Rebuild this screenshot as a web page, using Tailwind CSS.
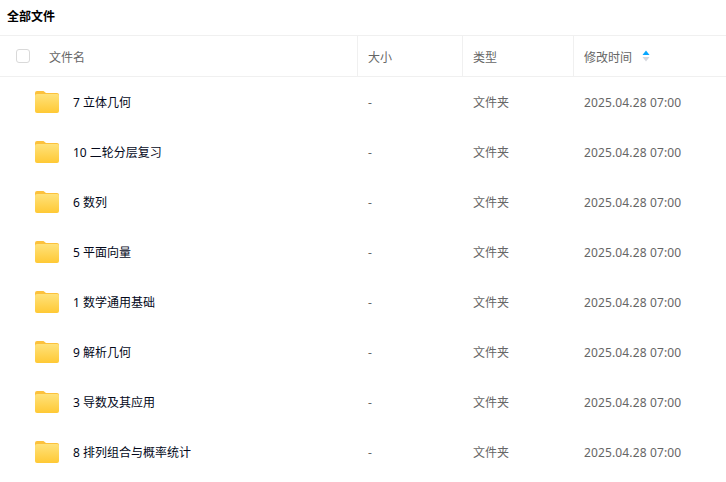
<!DOCTYPE html>
<html lang="zh-CN">
<head>
    <meta charset="UTF-8">
    <meta name="viewport" content="width=device-width, initial-scale=1.0">
    <title>全部文件</title>
    <script src="https://cdn.jsdelivr.net/npm/@tailwindcss/browser@4"></script>
</head>
<body class="bg-white overflow-hidden font-['Noto_Sans','Noto_Sans_CJK_SC',sans-serif]">
<!-- 文件夹图标 -->
<svg width="0" height="0" class="absolute">
    <defs>
        <linearGradient id="folderFill" x1="0" y1="0" x2="0" y2="1">
            <stop offset="0" stop-color="#ffe27a"/>
            <stop offset="1" stop-color="#ffc935"/>
        </linearGradient>
    </defs>
    <symbol id="folder" viewBox="0 0 24 22">
        <path d="M2 0h6.5l2.5 2h11a2 2 0 0 1 2 2v3H0V2a2 2 0 0 1 2-2z" fill="#fcc13c"/>
        <rect y="3" width="24" height="19" rx="2" fill="url(#folderFill)"/>
    </symbol>
</svg>
<div class="w-[726px] h-[482px] overflow-hidden">
    <!-- 标题 -->
    <div class="h-[35px] pl-[7px] pb-[2px] flex items-center text-xs font-bold text-black">全部文件</div>

    <!-- 表头 -->
    <div class="h-[42px] grid grid-cols-[358px_105px_111px_1fr] border-y border-[#f0f0f0] text-xs text-[#666]">
        <div class="flex items-center border-r border-[#f0f0f0]">
            <span class="ml-4 w-[14px] h-[14px] rounded-[3px] border border-[#d9d9d9]"></span>
            <span class="ml-[19px] pt-[3px]">文件名</span>
        </div>
        <div class="flex items-center border-r border-[#f0f0f0] pl-[10px] pt-[3px]">大小</div>
        <div class="flex items-center border-r border-[#f0f0f0] pl-[10px] pt-[3px]">类型</div>
        <div class="flex items-center pl-[10px]">
            <span class="pt-[3px]">修改时间</span>
            <svg class="ml-[10px]" width="8" height="12" viewBox="0 0 8 12">
                <path d="M4 0.5 L7.5 5 L0.5 5 Z" fill="#06a7ff"/>
                <path d="M4 11.5 L7.5 7 L0.5 7 Z" fill="#d4d7de"/>
            </svg>
        </div>
    </div>

    <!-- 文件列表 -->
    <div class="text-xs text-[#666]">
        <div class="h-[50px] grid grid-cols-[358px_105px_111px_1fr] items-center">
            <div class="flex items-center pl-[35px] text-[#03081a]">
                <svg width="24" height="22"><use href="#folder"/></svg>
                <span class="ml-[14px] pt-[2px]">7 立体几何</span>
            </div>
            <div class="pl-[10px] pt-[2px]">-</div><div class="pl-[10px] pt-[2px]">文件夹</div><div class="pl-[10px] pt-[2px] tracking-[0.13px]">2025.04.28 07:00</div>
        </div>
        <div class="h-[50px] grid grid-cols-[358px_105px_111px_1fr] items-center">
            <div class="flex items-center pl-[35px] text-[#03081a]">
                <svg width="24" height="22"><use href="#folder"/></svg>
                <span class="ml-[14px] pt-[2px]">10 二轮分层复习</span>
            </div>
            <div class="pl-[10px] pt-[2px]">-</div><div class="pl-[10px] pt-[2px]">文件夹</div><div class="pl-[10px] pt-[2px] tracking-[0.13px]">2025.04.28 07:00</div>
        </div>
        <div class="h-[50px] grid grid-cols-[358px_105px_111px_1fr] items-center">
            <div class="flex items-center pl-[35px] text-[#03081a]">
                <svg width="24" height="22"><use href="#folder"/></svg>
                <span class="ml-[14px] pt-[2px]">6 数列</span>
            </div>
            <div class="pl-[10px] pt-[2px]">-</div><div class="pl-[10px] pt-[2px]">文件夹</div><div class="pl-[10px] pt-[2px] tracking-[0.13px]">2025.04.28 07:00</div>
        </div>
        <div class="h-[50px] grid grid-cols-[358px_105px_111px_1fr] items-center">
            <div class="flex items-center pl-[35px] text-[#03081a]">
                <svg width="24" height="22"><use href="#folder"/></svg>
                <span class="ml-[14px] pt-[2px]">5 平面向量</span>
            </div>
            <div class="pl-[10px] pt-[2px]">-</div><div class="pl-[10px] pt-[2px]">文件夹</div><div class="pl-[10px] pt-[2px] tracking-[0.13px]">2025.04.28 07:00</div>
        </div>
        <div class="h-[50px] grid grid-cols-[358px_105px_111px_1fr] items-center">
            <div class="flex items-center pl-[35px] text-[#03081a]">
                <svg width="24" height="22"><use href="#folder"/></svg>
                <span class="ml-[14px] pt-[2px]">1 数学通用基础</span>
            </div>
            <div class="pl-[10px] pt-[2px]">-</div><div class="pl-[10px] pt-[2px]">文件夹</div><div class="pl-[10px] pt-[2px] tracking-[0.13px]">2025.04.28 07:00</div>
        </div>
        <div class="h-[50px] grid grid-cols-[358px_105px_111px_1fr] items-center">
            <div class="flex items-center pl-[35px] text-[#03081a]">
                <svg width="24" height="22"><use href="#folder"/></svg>
                <span class="ml-[14px] pt-[2px]">9 解析几何</span>
            </div>
            <div class="pl-[10px] pt-[2px]">-</div><div class="pl-[10px] pt-[2px]">文件夹</div><div class="pl-[10px] pt-[2px] tracking-[0.13px]">2025.04.28 07:00</div>
        </div>
        <div class="h-[50px] grid grid-cols-[358px_105px_111px_1fr] items-center">
            <div class="flex items-center pl-[35px] text-[#03081a]">
                <svg width="24" height="22"><use href="#folder"/></svg>
                <span class="ml-[14px] pt-[2px]">3 导数及其应用</span>
            </div>
            <div class="pl-[10px] pt-[2px]">-</div><div class="pl-[10px] pt-[2px]">文件夹</div><div class="pl-[10px] pt-[2px] tracking-[0.13px]">2025.04.28 07:00</div>
        </div>
        <div class="h-[50px] grid grid-cols-[358px_105px_111px_1fr] items-center">
            <div class="flex items-center pl-[35px] text-[#03081a]">
                <svg width="24" height="22"><use href="#folder"/></svg>
                <span class="ml-[14px] pt-[2px]">8 排列组合与概率统计</span>
            </div>
            <div class="pl-[10px] pt-[2px]">-</div><div class="pl-[10px] pt-[2px]">文件夹</div><div class="pl-[10px] pt-[2px] tracking-[0.13px]">2025.04.28 07:00</div>
        </div>
    </div>
</div>
</body>
</html>
